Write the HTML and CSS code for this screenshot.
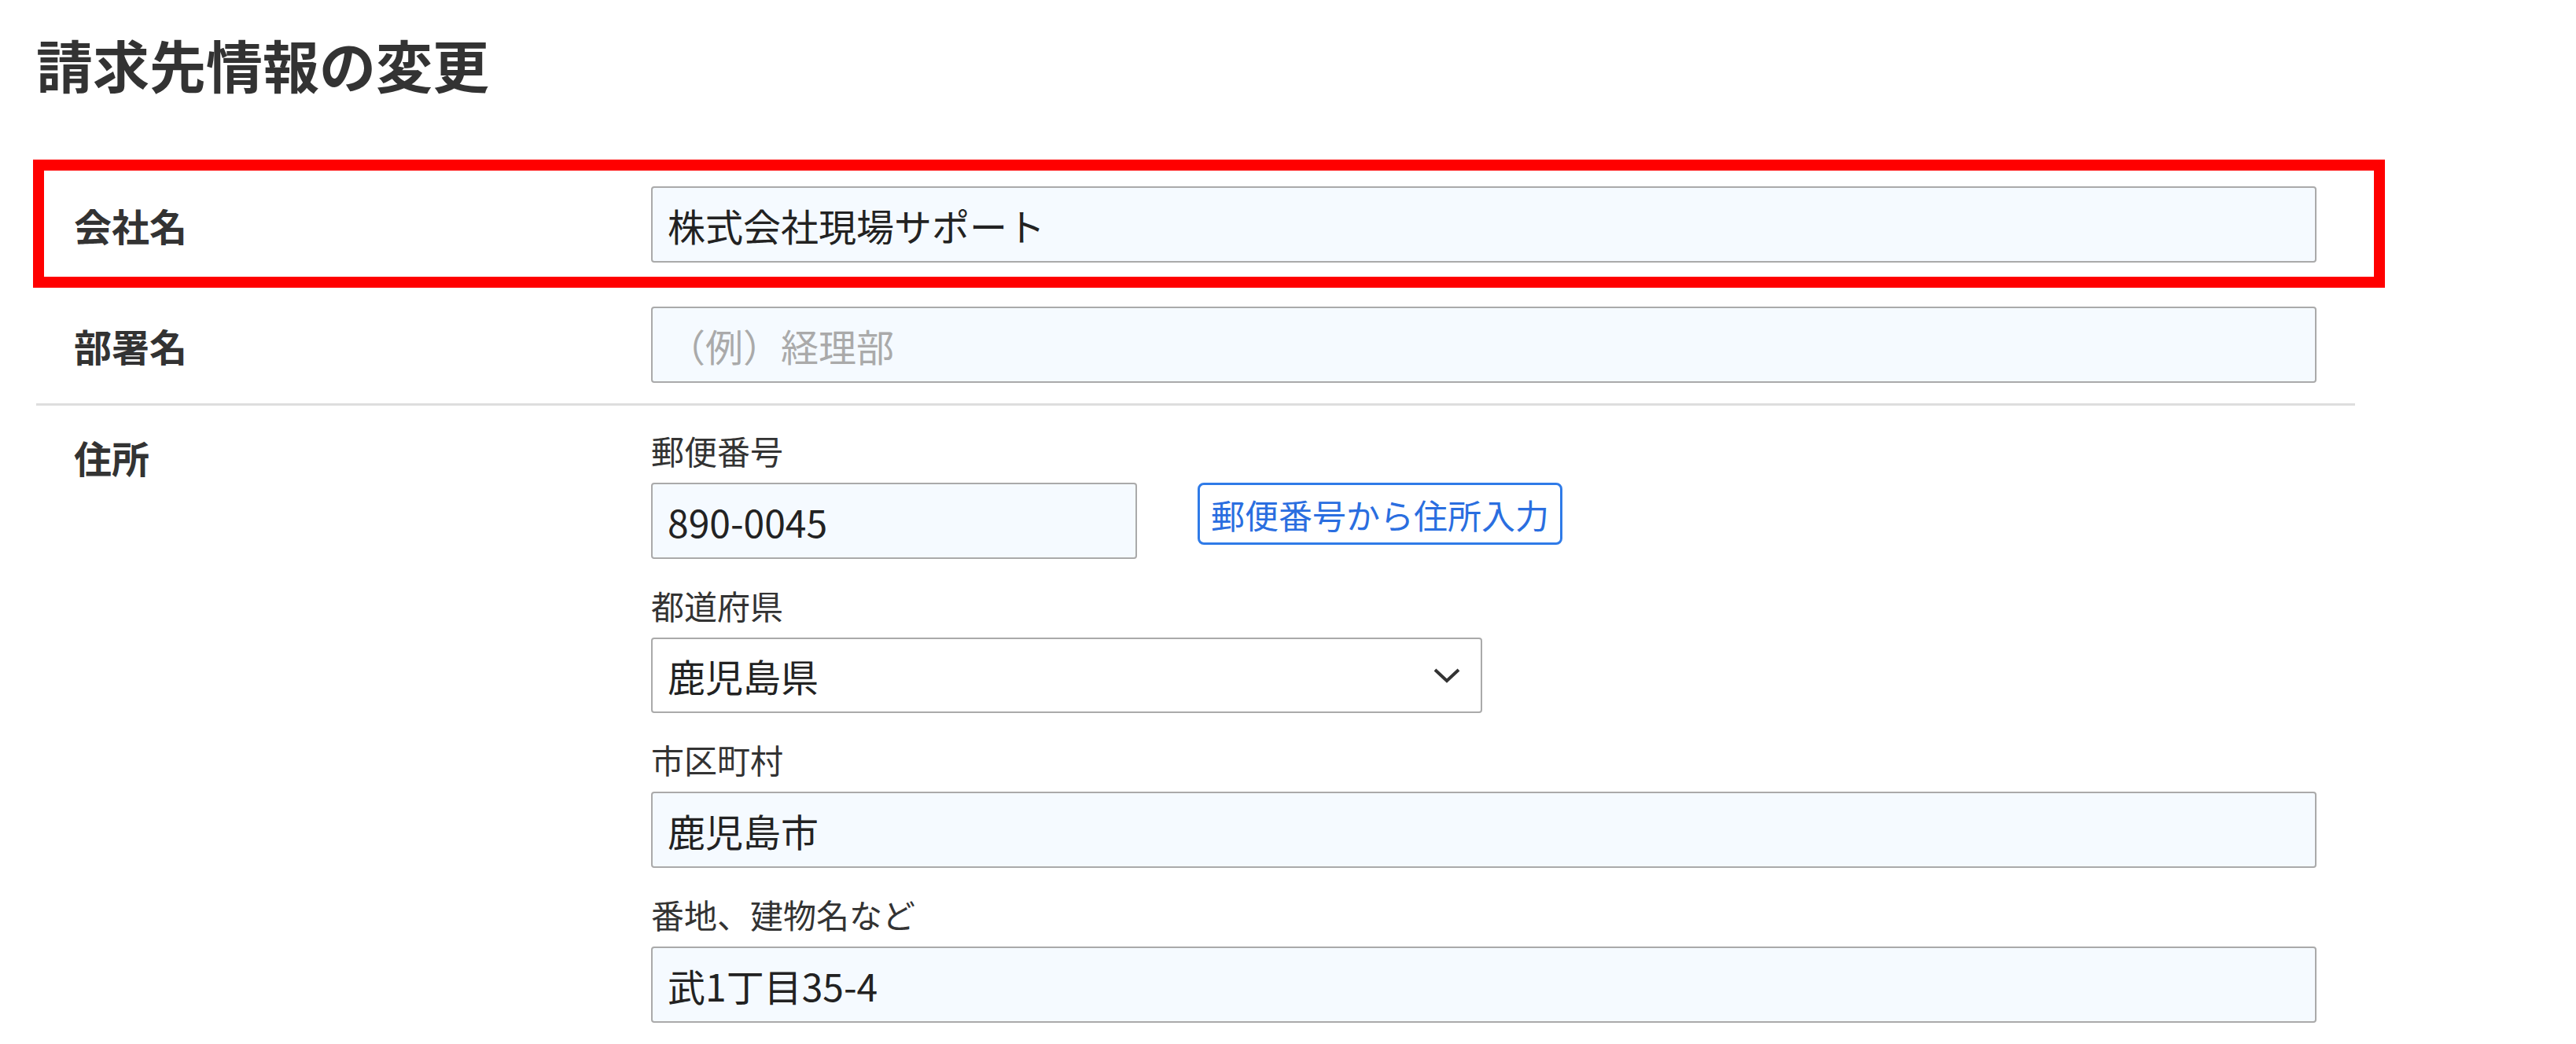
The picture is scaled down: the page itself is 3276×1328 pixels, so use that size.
FILE: index.html
```html
<!DOCTYPE html>
<html lang="ja">
<head>
  <meta charset="UTF-8" />
  <title>請求先情報の変更</title>
  <link rel="stylesheet" href="styles.css">
</head>
<body>
  <div class="page">
    <h1>請求先情報の変更</h1>

    <div class="form">
      <!-- 会社名 -->
      <div class="row highlight">
        <div class="row-label">会社名</div>
        <div class="row-field">
          <input type="text" class="text-input" value="株式会社現場サポート" />
        </div>
      </div>

      <!-- 部署名 -->
      <div class="row">
        <div class="row-label">部署名</div>
        <div class="row-field">
          <input type="text" class="text-input" placeholder="（例）経理部" />
        </div>
      </div>

      <!-- 住所 -->
      <div class="row top">
        <div class="row-label">住所</div>
        <div class="row-field">
          <div class="field-group">
            <label class="sub-label">郵便番号</label>
            <div class="zip-line">
              <input type="text" class="text-input zip" value="890-0045" />
              <button class="zip-btn">郵便番号から住所入力</button>
            </div>
          </div>
          <div class="field-group">
            <label class="sub-label">都道府県</label>
            <div class="select-wrap">
              <select class="pref-select">
                <option>鹿児島県</option>
              </select>
              <svg class="chevron" width="36" height="20" viewBox="0 0 36 20">
                <polyline points="3,3 18,17 33,3" fill="none" stroke="#333" stroke-width="4" />
              </svg>
            </div>
          </div>
          <div class="field-group">
            <label class="sub-label">市区町村</label>
            <input type="text" class="text-input" value="鹿児島市" />
          </div>
          <div class="field-group">
            <label class="sub-label">番地、建物名など</label>
            <input type="text" class="text-input" value="武1丁目35-4" />
          </div>
        </div>
      </div>
    </div>
  </div>
</body>
</html>
```

FILE: styles.css
```css
body {
  margin: 0;
  background-color: #fff;
  font-family: "Noto Sans CJK JP", "Noto Sans", sans-serif;
  color: #333;
}
.page {
  padding-left: 46px;
}
h1 {
  margin: 38px 0 86px 0;
  font-size: 72px;
  line-height: 86px;
  font-weight: bold;
  color: #333;
}
.form {
  width: 2949px;
}
.row {
  display: flex;
  align-items: center;
  padding: 27px 49px 26px 48px;
  border-bottom: 3px solid #dedede;
}
.row:last-child {
  border-bottom: none;
}
.row.top {
  align-items: flex-start;
  padding-top: 28px;
}
.row.highlight {
  position: relative;
}
.row.highlight::after {
  content: "";
  position: absolute;
  left: -4px;
  right: -38px;
  top: -7px;
  bottom: -6px;
  border: 14px solid #ff0000;
  pointer-events: none;
}
.row-label {
  width: 734px;
  font-size: 48px;
  line-height: 58px;
  font-weight: bold;
  color: #333;
}
.row.top .row-label {
  margin-top: 8px;
}
.row-field {
  flex: 1;
}
.text-input {
  display: block;
  box-sizing: border-box;
  width: 100%;
  height: 97px;
  padding: 0 19px;
  border: 2px solid #aaa;
  border-radius: 4px;
  background-color: #f5faff;
  font-family: "Noto Sans CJK JP", "Noto Sans", sans-serif;
  font-size: 48px;
  color: #222;
}
.text-input::placeholder {
  color: #aaa;
}
.field-group {
  margin-bottom: 30px;
}
.field-group:last-child {
  margin-bottom: 0;
}
.sub-label {
  display: block;
  margin-bottom: 12px;
  font-size: 42px;
  line-height: 58px;
  color: #333;
}
.zip-line {
  display: flex;
  align-items: flex-start;
  gap: 77px;
}
.text-input.zip {
  width: 618px;
}
.zip-btn {
  height: 79px;
  padding: 0 14px;
  border: 3px solid #2f7be8;
  border-radius: 8px;
  background-color: #fff;
  font-family: "Noto Sans CJK JP", "Noto Sans", sans-serif;
  font-size: 43px;
  color: #2a6ee0;
  cursor: pointer;
}
.select-wrap {
  position: relative;
  width: 1057px;
}
.pref-select {
  display: block;
  box-sizing: border-box;
  width: 100%;
  height: 96px;
  padding: 0 19px;
  border: 2px solid #aaa;
  border-radius: 4px;
  background-color: #fff;
  font-family: "Noto Sans CJK JP", "Noto Sans", sans-serif;
  font-size: 48px;
  color: #222;
  appearance: none;
  -webkit-appearance: none;
}
.chevron {
  position: absolute;
  right: 27px;
  top: 38px;
  pointer-events: none;
}
```
